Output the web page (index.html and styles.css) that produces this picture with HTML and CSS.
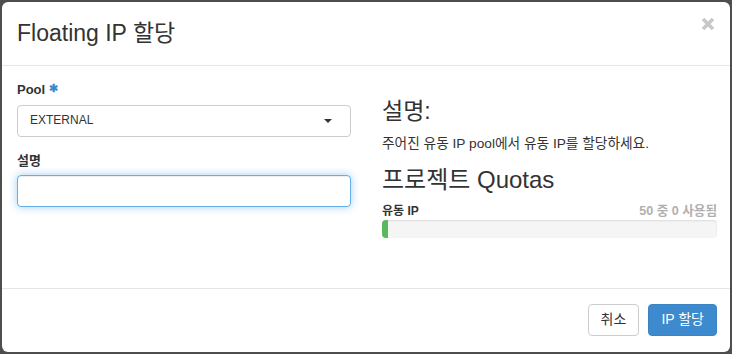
FILE: index.html
```html
<!DOCTYPE html>
<html lang="ko">

<head>
  <meta charset="UTF-8">
  <meta name="viewport" content="width=device-width, initial-scale=1.0">
  <link rel="stylesheet" href="styles.css">
</head>

<body>
  <div class="modal">
    <div class="modal__header">
      <h3 class="modal__title">Floating IP 할당</h3>
      <button class="modal__close" aria-label="닫기">
        <svg viewBox="0 0 14 14" width="14" height="14">
          <path d="M2 2 L12 12 M12 2 L2 12" />
        </svg>
      </button>
    </div>

    <div class="modal__body">
      <div class="form">
        <div class="form__group">
          <label class="form__label">Pool <span class="form__required">&#x2731;</span></label>
          <div class="select">
            <span>EXTERNAL</span>
            <svg class="select__caret" viewBox="0 0 8 4" width="8" height="4">
              <path d="M0 0 H8 L4 4 Z" />
            </svg>
          </div>
        </div>
        <div class="form__group">
          <label class="form__label">설명</label>
          <input class="input input--focus" type="text">
        </div>
      </div>

      <div class="help">
        <h3 class="help__title">설명:</h3>
        <p class="help__text">주어진 유동 IP pool에서 유동 IP를 할당하세요.</p>
        <h3 class="help__quota">프로젝트 Quotas</h3>
        <div class="quota">
          <div class="quota__row">
            <strong class="quota__name">유동 IP</strong>
            <span class="quota__used">50 중 0 사용됨</span>
          </div>
          <div class="progress">
            <div class="progress__bar" style="width: 6px"></div>
          </div>
        </div>
      </div>
    </div>

    <div class="modal__footer">
      <button class="btn">취소</button>
      <button class="btn btn--primary">IP 할당</button>
    </div>
  </div>
</body>

</html>
```

FILE: styles.css
```css
* {
  box-sizing: border-box;
}

body {
  margin: 0;
  padding: 2px;
  height: 100vh;
  background-color: #4e4e4e;
  font-family: "Liberation Sans", "Noto Sans CJK KR", sans-serif;
  font-size: 13px;
  line-height: 1.42857;
  color: #333;
  overflow: hidden;
}

.modal {
  display: flex;
  flex-direction: column;
  width: 728px;
  height: 350px;
  background-color: #fff;
  border-radius: 6px;
}

.modal__header {
  display: flex;
  justify-content: space-between;
  align-items: flex-start;
  height: 64px;
  padding: 15px;
  border-bottom: 1px solid #e5e5e5;
}

.modal__title {
  margin: 0;
  font-size: 23px;
  font-weight: 400;
  line-height: 33px;
}

.modal__close {
  padding: 0;
  margin: 0;
  border: 0;
  background: none;
}

.modal__close svg {
  display: block;
  fill: none;
  stroke: #c8c8c8;
  stroke-width: 3.6;
}

.modal__body {
  flex: 1;
  display: grid;
  grid-template-columns: 334px 335px;
  column-gap: 31px;
  padding: 15px;
}

.form__group {
  margin-bottom: 15px;
}

.form__label {
  display: block;
  margin-bottom: 5px;
  font-weight: 700;
}

.form__required {
  color: #3d8ace;
  font-size: 11px;
  vertical-align: top;
}

.select {
  display: flex;
  align-items: center;
  justify-content: space-between;
  height: 32px;
  padding: 0 18px 0 12px;
  border: 1px solid #ccc;
  border-radius: 4px;
  font-size: 12px;
}

.select__caret {
  fill: #333;
}

.input {
  display: block;
  width: 100%;
  height: 32px;
  padding: 6px 12px;
  border: 1px solid #ccc;
  border-radius: 4px;
  font: inherit;
}

.input--focus {
  border-color: #66afe9;
  outline: 0;
  box-shadow: inset 0 1px 1px rgba(0, 0, 0, 0.075), 0 0 8px rgba(102, 175, 233, 0.6);
}

.help__title {
  margin: 18px 0 10px;
  font-size: 23px;
  font-weight: 400;
  line-height: 1.1;
}

.help__text {
  margin: 0 0 10px;
  font-size: 13.7px;
}

.help__quota {
  margin: 13px 0 10px;
  font-size: 24px;
  font-weight: 400;
  line-height: 1.1;
}

.quota__row {
  display: flex;
  justify-content: space-between;
  font-size: 12px;
  line-height: 17px;
}

.quota__used {
  color: #b0b0b0;
  font-weight: 700;
  font-size: 12.6px;
}

.progress {
  height: 18px;
  background-color: #f5f5f5;
  border-radius: 4px;
  box-shadow: inset 0 1px 2px rgba(0, 0, 0, 0.1);
  overflow: hidden;
}

.progress__bar {
  height: 100%;
  background-color: #5cb85c;
}

.modal__footer {
  display: flex;
  justify-content: flex-end;
  gap: 9px;
  height: 64px;
  padding: 15px 13px 15px 15px;
  border-top: 1px solid #e5e5e5;
}

.btn {
  height: 32px;
  padding: 0 12px;
  border: 1px solid #ccc;
  border-radius: 4px;
  background-color: #fff;
  color: #333;
  font: inherit;
  font-size: 14px;
}

.btn--primary {
  border-color: #3a84c4;
  background-color: #3d8ace;
  color: #fff;
}
```
